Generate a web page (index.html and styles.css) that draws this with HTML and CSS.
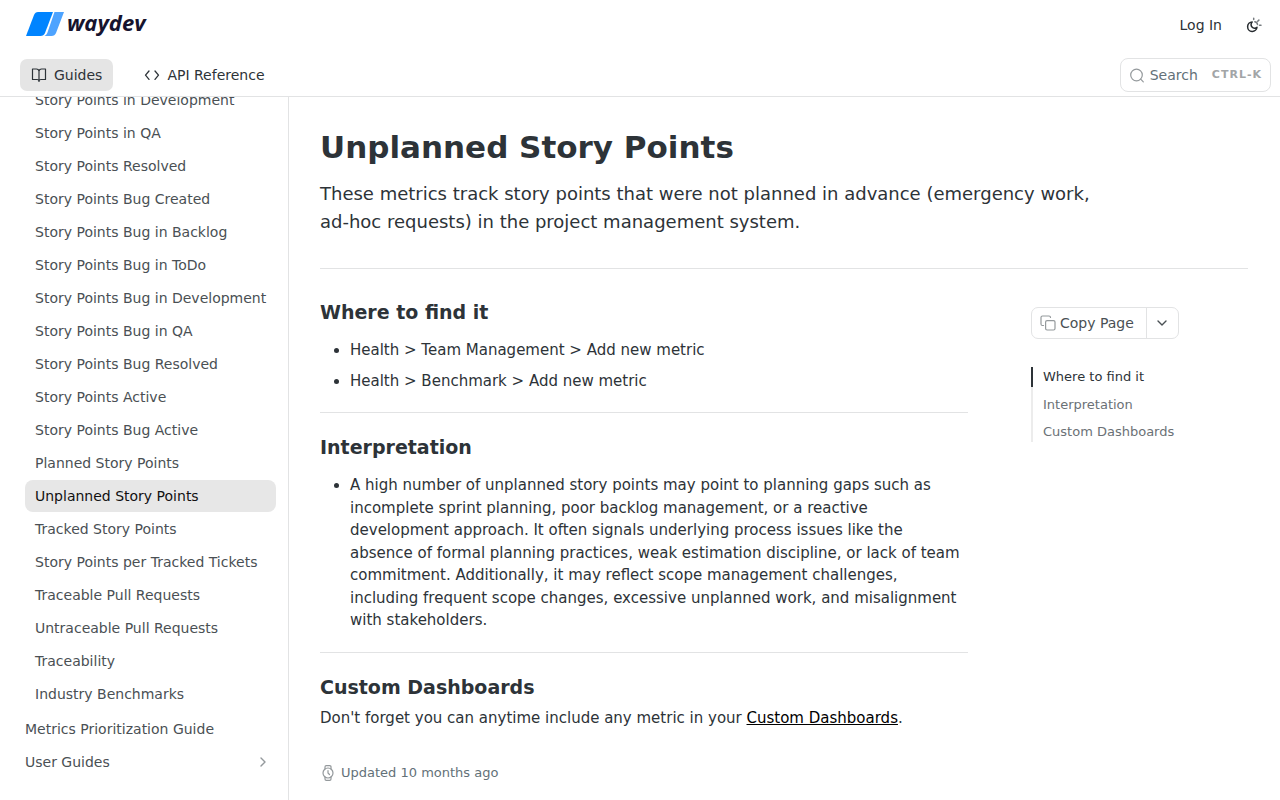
FILE: index.html
```html
<!DOCTYPE html>
<html lang="en">
<head>
<meta charset="utf-8">
<meta name="viewport" content="width=device-width, initial-scale=1">
<title>Unplanned Story Points</title>
<link rel="stylesheet" href="styles.css">
</head>
<body>
<header class="header">
  <div class="header-top">
    <a class="logo" href="#">
      <svg class="logo-mark" width="40" height="26" viewBox="0 0 40 26" aria-hidden="true">
        <path d="M13 1h15L20 22q-1.200 3-4.500 3H1L9 4q1.200-3 4-3z" fill="#0084ff"/>
        <path d="M29.500 1H39l-8 21q-1.200 3-4.500 3h-7q2-1 2.800-3z" fill="#4da3ff"/>
      </svg>
      <span class="logo-text">waydev</span>
    </a>
    <div class="header-actions">
      <a class="login" href="#">Log In</a>
      <button class="theme" type="button" aria-label="Toggle theme">
        <svg width="16" height="16" viewBox="0 0 16 16" fill="none" stroke-linecap="round" stroke-linejoin="round" aria-hidden="true">
          <path d="M6.200 5A4.700 4.700 0 1 0 11 10.200 3.300 3.300 0 0 1 6.200 5z" stroke="#262b2f" stroke-width="1.500"/>
          <path d="M7.700 1.200v1.300M11.700 4.300l1.200-1.200M13.500 8.300H15M8.800 4.800q2.400.3 2.700 2.700" stroke="#777c80" stroke-width="1.500"/>
        </svg>
      </button>
    </div>
  </div>
  <div class="header-nav">
    <nav class="tabs" aria-label="Sections">
      <a class="tab tab-active" href="#">
        <svg width="16" height="16" viewBox="0 0 16 16" fill="none" stroke="currentColor" stroke-width="1.200" stroke-linejoin="round" aria-hidden="true"><path d="M8 4v10.500M8 4q-.5-2-2.500-2H1.500v10.500H6q2 0 2 2 0-2 2-2h4.500V2h-4Q8.500 2 8 4z"/></svg>
        Guides
      </a>
      <a class="tab" href="#">
        <svg width="16" height="16" viewBox="0 0 16 16" fill="none" stroke="currentColor" stroke-width="1.300" stroke-linecap="round" stroke-linejoin="round" aria-hidden="true"><path d="M5 4 1.500 8.200 5 12.400M11 4l3.500 4.200L11 12.400"/></svg>
        API Reference
      </a>
    </nav>
    <button class="search" type="button">
      <svg width="16" height="16" viewBox="0 0 16 16" fill="none" stroke="#94999c" stroke-width="1.200" stroke-linecap="round" aria-hidden="true"><circle cx="7.500" cy="8" r="5.800"/><path d="m11.700 12.200 2.600 2.600"/></svg>
      <span>Search</span>
      <kbd>CTRL-K</kbd>
    </button>
  </div>
</header>
<div class="layout">
  <nav class="sidebar" aria-label="Pages">
    <ul class="pages pages-nested">
      <li><a href="#">Story Points in Development</a></li>
      <li><a href="#">Story Points in QA</a></li>
      <li><a href="#">Story Points Resolved</a></li>
      <li><a href="#">Story Points Bug Created</a></li>
      <li><a href="#">Story Points Bug in Backlog</a></li>
      <li><a href="#">Story Points Bug in ToDo</a></li>
      <li><a href="#">Story Points Bug in Development</a></li>
      <li><a href="#">Story Points Bug in QA</a></li>
      <li><a href="#">Story Points Bug Resolved</a></li>
      <li><a href="#">Story Points Active</a></li>
      <li><a href="#">Story Points Bug Active</a></li>
      <li><a href="#">Planned Story Points</a></li>
      <li><a class="current" href="#" aria-current="page">Unplanned Story Points</a></li>
      <li><a href="#">Tracked Story Points</a></li>
      <li><a href="#">Story Points per Tracked Tickets</a></li>
      <li><a href="#">Traceable Pull Requests</a></li>
      <li><a href="#">Untraceable Pull Requests</a></li>
      <li><a href="#">Traceability</a></li>
      <li><a href="#">Industry Benchmarks</a></li>
    </ul>
    <ul class="pages">
      <li><a href="#">Metrics Prioritization Guide</a></li>
      <li><a href="#">User Guides
        <svg width="10" height="12" viewBox="0 0 10 12" fill="none" stroke="#94999c" stroke-width="1.400" stroke-linecap="round" stroke-linejoin="round" aria-hidden="true"><path d="m3 2 4 4-4 4"/></svg>
      </a></li>
    </ul>
  </nav>
  <main class="main">
    <header class="intro">
      <h1>Unplanned Story Points</h1>
      <p>These metrics track story points that were not planned in advance (emergency work, ad-hoc requests) in the project management system.</p>
    </header>
    <div class="columns">
      <article class="article">
        <section id="where">
          <h2>Where to find it</h2>
          <ul>
            <li>Health &gt; Team Management &gt; Add new metric</li>
            <li>Health &gt; Benchmark &gt; Add new metric</li>
          </ul>
        </section>
        <hr>
        <section id="interpretation">
          <h2>Interpretation</h2>
          <ul>
            <li>A high number of unplanned story points may point to planning gaps such as incomplete sprint planning, poor backlog management, or a reactive development approach. It often signals underlying process issues like the absence of formal planning practices, weak estimation discipline, or lack of team commitment. Additionally, it may reflect scope management challenges, including frequent scope changes, excessive unplanned work, and misalignment with stakeholders.</li>
          </ul>
        </section>
        <hr>
        <section id="dashboards">
          <h2>Custom Dashboards</h2>
          <p>Don't forget you can anytime include any metric in your <a href="#">Custom Dashboards</a>.</p>
        </section>
        <div class="updated">
          <svg width="16" height="16" viewBox="0 0 16 16" fill="none" stroke="#94999c" stroke-width="1.200" stroke-linecap="round" stroke-linejoin="round" aria-hidden="true"><circle cx="8" cy="8" r="5"/><path d="M5 4V2q0-1.300 1.300-1.300h3.400Q11 .7 11 2v2M5 12v2q0 1.300 1.300 1.300h3.400Q11 15.300 11 14v-2M8 5.500V8l1.500 1.500"/></svg>
          <span>Updated 10 months ago</span>
        </div>
      </article>
      <aside class="aside">
        <div class="copy">
          <button class="copy-main" type="button">
            <svg width="16" height="16" viewBox="0 0 16 16" fill="none" stroke="#94999c" stroke-width="1.200" stroke-linejoin="round" stroke-linecap="round" aria-hidden="true"><rect x="5.600" y="5.600" width="9.400" height="9.400" rx="1.500"/><path d="M3.500 10.500h-1Q1 10.500 1 9V2.500Q1 1 2.500 1H9q1.500 0 1.500 1.500"/></svg>
            Copy Page
          </button>
          <button class="copy-more" type="button" aria-label="More options">
            <svg width="12" height="12" viewBox="0 0 12 12" fill="none" stroke="currentColor" stroke-width="1.400" stroke-linecap="round" stroke-linejoin="round" aria-hidden="true"><path d="m2 4 4 4 4-4"/></svg>
          </button>
        </div>
        <nav class="toc" aria-label="On this page">
          <a class="toc-active" href="#where">Where to find it</a>
          <a href="#interpretation">Interpretation</a>
          <a href="#dashboards">Custom Dashboards</a>
        </nav>
      </aside>
    </div>
  </main>
</div>
</body>
</html>
```

FILE: styles.css
```css
* { box-sizing: border-box; }

body {
  margin: 0;
  height: 100vh;
  display: flex;
  flex-direction: column;
  overflow: hidden;
  background: #fff;
  color: #2d3338;
  font-family: "DejaVu Sans", sans-serif;
  font-size: 15px;
  line-height: 1.5;
}

a { color: inherit; text-decoration: none; }
button { margin: 0; background: none; border: 0; font: inherit; color: inherit; cursor: pointer; }
svg { flex: none; display: block; }
h1, h2, p, ul { margin: 0; }

/* Header */
.header { flex: none; border-bottom: 1px solid #e2e3e4; font-size: 14px; }
.header-top {
  display: flex;
  align-items: center;
  justify-content: space-between;
  height: 50px;
  padding: 0 16px 0 25px;
}
.logo { display: flex; align-items: center; gap: 2px; padding-bottom: 3px; }
.logo-text {
  font: italic 700 22px/22px "Open Sans", sans-serif;
  padding-bottom: 4px;
  color: #16132e;
}
.header-actions { display: flex; align-items: center; gap: 22px; }
.theme { display: flex; padding: 2px; }
.header-nav {
  display: flex;
  align-items: center;
  justify-content: space-between;
  height: 46px;
  padding: 4px 9px 0 20px;
}
.tabs { display: flex; gap: 20px; }
.tab {
  display: flex;
  align-items: center;
  gap: 7px;
  height: 32px;
  padding: 0 11px;
  border-radius: 7px;
}
.tab-active { background: #e5e5e5; }
.search {
  display: flex;
  align-items: center;
  height: 34px;
  gap: 5px;
  padding: 0 8px;
  border: 1px solid #e2e3e4;
  border-radius: 8px;
  color: #637178;
}
.search kbd {
  margin-left: 9px;
  font: 700 11px/16px "DejaVu Sans", sans-serif;
  letter-spacing: 1px;
  color: #a2a5a7;
}

/* Sidebar: scrolled to the end of its list */
.layout { flex: 1; min-height: 0; display: flex; }
.sidebar {
  flex: none;
  width: 289px;
  display: flex;
  flex-direction: column;
  justify-content: flex-end;
  gap: 3px;
  overflow: hidden;
  padding: 0 12px 22px 25px;
  border-right: 1px solid #e2e3e4;
  font-size: 14px;
  color: #4a5054;
}
.pages { display: flex; flex-direction: column; gap: 1px; padding: 0; list-style: none; }
.pages a {
  display: flex;
  align-items: center;
  justify-content: space-between;
  height: 32px;
  padding-right: 8px;
  border-radius: 8px;
  white-space: nowrap;
}
.pages-nested a { padding-left: 10px; }
.pages .current { background: #e7e7e7; color: #111; }

/* Page */
.main { flex: 1; min-width: 0; overflow: hidden; padding: 30px 32px 0 31px; }
.intro { padding-bottom: 32px; border-bottom: 1px solid #e2e3e4; }
.intro h1 { font-size: 31px; line-height: 40px; }
.intro p { max-width: 800px; margin-top: 13px; font-size: 18px; line-height: 28px; }
.columns { display: grid; grid-template-columns: minmax(0, 1fr) 217px; gap: 63px; }
.article { padding-top: 31px; }
.article h2 { font-size: 19px; line-height: 24px; }
.article ul { margin-top: 15px; padding-left: 30px; }
.article li + li { margin-top: 8px; }
.article p { margin-top: 8px; }
.article p a { color: #000; text-decoration: underline; }
.article hr { margin: 20px 0 22px; border: 0; border-top: 1px solid #e2e3e4; }
.updated {
  display: flex;
  align-items: center;
  gap: 5px;
  margin-top: 34px;
  font-size: 13px;
  color: #637178;
}

/* Right rail */
.aside { padding-top: 38px; }
.copy {
  display: inline-flex;
  height: 32px;
  border: 1px solid #e2e3e4;
  border-radius: 7px;
  font-size: 14px;
  color: #4a5054;
}
.copy-main { display: flex; align-items: center; gap: 4px; padding: 0 12px 0 8px; }
.copy-more { display: flex; align-items: center; padding: 0 10px 0 9px; border-left: 1px solid #e2e3e4; }
.toc {
  display: flex;
  flex-direction: column;
  gap: 8px;
  margin-top: 28px;
  border-left: 2px solid #ececec;
  font-size: 13px;
  color: #6b7176;
}
.toc a { padding-left: 10px; }
.toc .toc-active { margin-left: -2px; border-left: 2px solid #2d3338; color: #2d3338; }
```
